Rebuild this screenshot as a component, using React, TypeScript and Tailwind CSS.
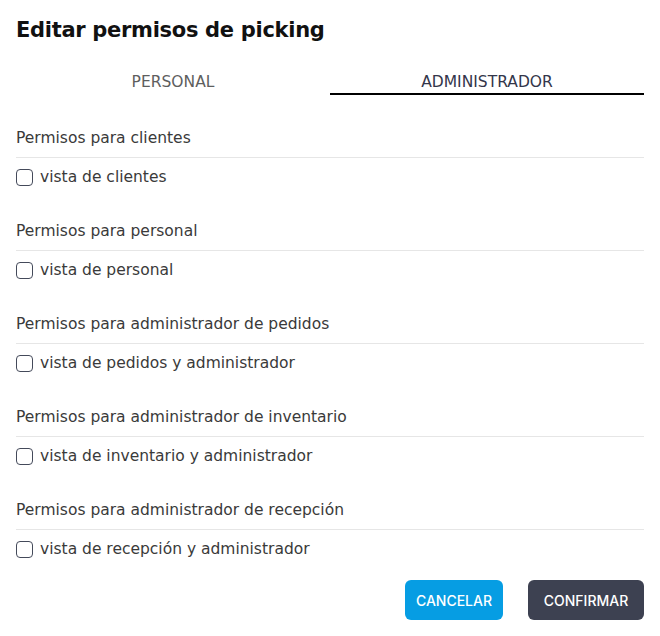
import React, { useState } from 'react';

const sections = [
  { title: 'Permisos para clientes', label: 'vista de clientes' },
  { title: 'Permisos para personal', label: 'vista de personal' },
  { title: 'Permisos para administrador de pedidos', label: 'vista de pedidos y administrador' },
  { title: 'Permisos para administrador de inventario', label: 'vista de inventario y administrador' },
  { title: 'Permisos para administrador de recepción', label: 'vista de recepción y administrador' },
];

export default function App() {
  const [tab, setTab] = useState('admin');
  const [checked, setChecked] = useState<boolean[]>(sections.map(() => false));

  return (
    <div className="w-[660px] h-[636px] bg-white px-4 pt-4 text-[#2d2d2d]" style={{ fontFamily: '"DejaVu Sans", "Open Sans", sans-serif' }}>
      <h1 className="text-[21px] font-bold text-[#111] leading-[28px] tracking-[-0.3px]">Editar permisos de picking</h1>

      <div className="flex mt-[23px]">
        <button
          onClick={() => setTab('personal')}
          className={`flex-1 h-[28px] pt-[4px] text-[15.5px] font-normal ${tab === 'personal' ? 'border-b-2 border-black text-[#3a3d4a]' : 'text-[#5e5e5e]'}`}
        >
          PERSONAL
        </button>
        <button
          onClick={() => setTab('admin')}
          className={`flex-1 h-[28px] pt-[4px] text-[15.5px] font-normal ${tab === 'admin' ? 'border-b-2 border-black text-[#33364a]' : 'text-[#5e5e5e]'}`}
        >
          ADMINISTRADOR
        </button>
      </div>

      <div className="mt-[33px] flex flex-col gap-[34px]">
        {sections.map((s, i) => (
          <div key={i}>
            <div className="text-[15.5px] leading-[20px] text-[#3a3a3a] pb-[9px] border-b border-[#e6e6e6]">{s.title}</div>
            <label className="flex items-center gap-[7px] mt-[9px] text-[15.5px] leading-[20px] text-[#3a3a3a] cursor-pointer">
              <input
                type="checkbox"
                checked={checked[i]}
                onChange={() => setChecked(c => c.map((v, j) => (j === i ? !v : v)))}
                className="appearance-none w-[17px] h-[17px] border border-[#444a5a] rounded-[4px] bg-white checked:bg-[#3d4151]"
              />
              {s.label}
            </label>
          </div>
        ))}
      </div>

      <div className="flex justify-end gap-[25px] mt-[21px]" style={{ fontFamily: 'Inter, "Liberation Sans", sans-serif' }}>
        <button className="w-[98px] h-[40px] rounded-[6px] bg-[#069de3] text-white text-[14px] font-medium">CANCELAR</button>
        <button className="w-[116px] h-[40px] rounded-[6px] bg-[#3d4151] text-white text-[14px] font-medium">CONFIRMAR</button>
      </div>
    </div>
  );
}
